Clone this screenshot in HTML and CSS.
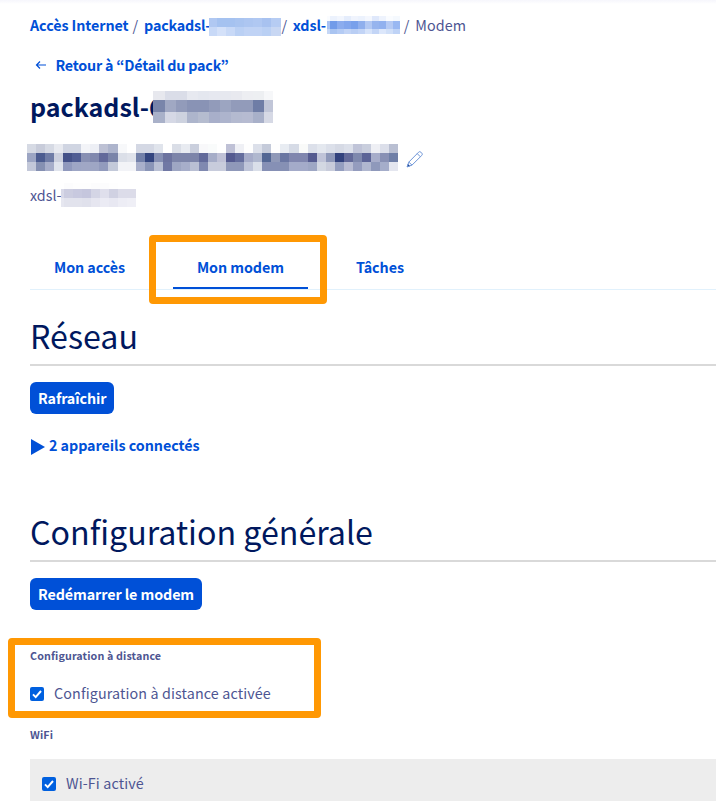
FILE: index.html
```
<!DOCTYPE html>
<html lang="fr">
<head>
<meta charset="utf-8">
<title>Modem</title>
<link rel="stylesheet" href="styles.css">
</head>
<body>
<main class="page">
  <nav class="breadcrumb">
    <a class="crumb-home">Accès Internet</a><span class="sep">/</span>
    <a class="crumb-pack">packadsl-</a><svg class="mosaic m-pack" data-mosaic="pack"></svg><span class="sep sep-pack">/</span>
    <a class="crumb-line">xdsl-</a><svg class="mosaic m-line" data-mosaic="line"></svg><span class="sep sep-line">/</span>
    <span class="current">Modem</span>
  </nav>
  <a class="back">
    <svg class="arrow" viewBox="0 0 12 10"><path d="M11 5H1.5M5 1.5L1.5 5L5 8.5"/></svg>
    <span class="back-text">Retour à “Détail du pack”</span>
  </a>
  <h1 class="title"><span class="title-text">packadsl-6</span><svg class="mosaic m-title" data-mosaic="title"></svg></h1>
  <div class="name">
    <svg class="mosaic m-name" data-mosaic="name"></svg>
    <svg class="pencil" viewBox="0 0 18 18"><path d="M1.2 16.8L2.8 12.1L12.6 2.2Q13.7 1 14.9 2.2L15.8 3.1Q16.9 4.2 15.8 5.4L6 15.1ZM2.8 12.1L6 15.1M11.2 3.6L14.4 6.8"/><path class="tip" d="M1.2 16.8L2 14.2L3.8 16Z"/></svg>
  </div>
  <div class="service"><span class="service-text">xdsl-</span><svg class="mosaic m-service" data-mosaic="service"></svg></div>
  <nav class="tabs">
    <a class="tab"><span class="t-access">Mon accès</span></a>
    <a class="tab active"><span class="t-modem">Mon modem</span><i class="highlight hl-tab"></i></a>
    <a class="tab"><span class="t-tasks">Tâches</span></a>
  </nav>
  <section class="network">
    <h2><span class="h-network">Réseau</span></h2>
    <button class="btn btn-refresh"><span>Rafraîchir</span></button>
    <div class="devices"><svg class="triangle" viewBox="0 0 15 16"><path d="M0 0L14 8L0 16Z"/></svg><span class="devices-text">2 appareils connectés</span></div>
  </section>
  <section class="general">
    <h2><span class="h-general">Configuration générale</span></h2>
    <button class="btn btn-restart"><span>Redémarrer le modem</span></button>
    <div class="remote">
      <div class="legend"><span class="l-remote">Configuration à distance</span></div>
      <div class="check"><svg class="box" viewBox="0 0 14 14"><rect width="14" height="14" rx="2"/><path d="M3 7.4L5.7 10.1L11 4"/></svg><span class="check-text">Configuration à distance activée</span></div>
      <i class="highlight hl-remote"></i>
    </div>
    <div class="legend legend-wifi"><span class="l-wifi">WiFi</span></div>
    <div class="panel check"><svg class="box" viewBox="0 0 14 14"><rect width="14" height="14" rx="2"/><path d="M3 7.4L5.7 10.1L11 4"/></svg><span class="check-text">Wi-Fi activé</span></div>
  </section>
</main>
<script src="mosaic.js"></script>
</body>
</html>
```
FILE: styles.css
```
* { box-sizing: border-box; }
body {
  margin: 0;
  background: #fff;
  color: #4d5592;
  font-family: "Noto Sans CJK KR", "Noto Sans", sans-serif;
  font-size: 14.32px;
  line-height: 24px;
}
.page {
  height: 801px;
  overflow: hidden;
  padding: 13px 0 0 30px;
  background: linear-gradient(#f6f6fc, #fff 4px);
  white-space: nowrap;
}
a { color: #0050d7; font-weight: 700; letter-spacing: -0.08px; }
svg { display: block; flex: none; }
.breadcrumb { display: flex; height: 24px; }
.sep { margin: 0 6px 0 4px; }
.crumb-pack { width: 65px; letter-spacing: -0.2px; }
.crumb-line { width: 34px; }
.m-pack { width: 72px; height: 18px; margin-top: 5px; }
.sep-pack { margin: 0 5.5px 0 0.5px; }
.m-line { width: 74px; height: 18px; margin-top: 3px; }
.sep-line { margin: 0 6px 0 3px; }
.current { letter-spacing: 0.05px; }
.back { display: flex; align-items: center; height: 24px; margin-top: 16px; padding-left: 5px; }
.back-text { letter-spacing: -0.22px; }
.arrow { width: 12px; height: 10px; margin-right: 8.5px; }
.arrow path { fill: none; stroke: #0050d7; stroke-width: 1.2; }
.title {
  display: flex;
  height: 36px;
  margin: 13px 0 0;
  color: #00185e;
  font-size: 25px;
  line-height: 32px;
}
.title-text { width: 123px; }
.m-title { position: relative; width: 120px; height: 32px; margin-top: 1px; }
.name { display: flex; height: 27px; margin: 18px 0 0 -3px; }
.m-name { width: 371px; height: 27px; }
.pencil { width: 18px; height: 18px; margin: 6px 0 0 8px; }
.pencil path { fill: none; stroke: #6f96d8; stroke-width: 1; }
.pencil .tip { fill: #00185e; }
.service { display: flex; height: 24px; margin-top: 12px; }
.m-service { width: 75px; height: 24px; }
.tabs { display: flex; height: 45px; margin-top: 38px; border-bottom: 1px solid #e1f1fc; }
.tab { position: relative; height: 44px; padding: 10px 24px 0; margin-right: 24px; }
.active { border-bottom: 2px solid #0050d7; }
.highlight { position: absolute; border: 7px solid #ff9803; border-radius: 4px; }
.hl-tab { left: -24px; top: -10px; width: 178px; height: 69px; }
h2 {
  height: 49px;
  margin: 0 0 16px;
  border-bottom: 2px solid #d9d9d9;
  color: #00185e;
  font-size: 32.2px;
  font-weight: 400;
  line-height: 36px;
}
.network { height: 196px; padding-top: 27px; }
.btn {
  display: block;
  height: 32px;
  padding: 0 8px;
  border: 0;
  border-radius: 6px;
  background: #0050d7;
  color: #fff;
  font: 700 14.32px/32px "Noto Sans CJK KR", sans-serif;
  letter-spacing: -0.1px;
}
.btn span { display: block; }
.devices { display: flex; height: 24px; margin: 19px 0 0 1px; color: #0050d7; font-weight: 700; letter-spacing: -0.06px; }
.triangle { width: 15px; height: 16px; margin: 6px 3px 0 0; }
.triangle path { fill: #0050d7; }
.general { padding-top: 27px; }
.remote { position: relative; height: 114px; padding-top: 36px; }
.legend { height: 20px; font-size: 10.74px; font-weight: 700; line-height: 20px; letter-spacing: 0.11px; }
.check { display: flex; }
.check-text { letter-spacing: 0.12px; }
.remote .check { height: 24px; margin-top: 15px; }
.box { width: 14px; height: 14px; margin: 6px 10px 0 0; }
.box rect { fill: #0060df; }
.box path { fill: none; stroke: #fff; stroke-width: 2; }
.hl-remote { left: -22px; top: 28px; width: 313px; height: 80px; }
.legend-wifi { height: 35px; line-height: 22px; }
.panel { height: 60px; padding: 12px 0 0 12px; background: #ededed; }
```
FILE: mosaic.js
```
// Colour rows of each masked value, drawn as blocks between the given edges.
const range = (first, step, end) => {
  const edges = [0];
  for (let x = first; x < end - 1; x += step) edges.push(x);
  edges.push(end);
  return edges;
};
const mosaics = {
  pack: { x: range(8, 9, 72), y: [0, 9, 18], rows: [
    "b0c8f2 a5c2f0 a5c2f0 a9c4f0 adc6f1 b0c8f2 a8c2f0 b6ccf3",
    "c8d9f7 d4e1f9 c8d9f7 bad0f4 c0d3f5 c0d3f5 bad0f4 c8d7f3"] },
  line: { x: [0, 3, 10, 17, 24, 31, 38, 45, 52, 59, 66, 73], y: [0, 5, 13, 18], rows: [
    "fafcff ecf2fd f2f6fe e5edfc f0f4fd ecf2fd f4f7fe dfe8fb eef3fd fafcff f5f9fe",
    "a8c2f3 719be9 8bacee 82a6ed 78a0eb 8fafed b2c8f3 96b4ee 91b1ef b5caf4 99b8f2",
    "c5d7f6 a9c4f1 b4cbf4 c2d4f6 b9cef4 c2d4f6 d6e3fa c3d5f6 dce7fb d0dff8 bfd3f6"] },
  title: { x: range(12, 11, 120), y: [0, 9, 20.5, 32], rows: [
    "e7e8ee dadde8 dadde8 e7e9f0 e4e7ef e6e8f0 e6e8ef e8e9ef edeef2 edeff2 f6f7f9",
    "7985aa a0a8c3 929bba 8993b5 8993b5 929bba 9ca5c1 929bba 929bba 6f7da6 c1c6d8",
    "a9b1c9 d5d8e5 cdd2df adb5cc b5bccf a8afca adb4cd b4bad0 b6bbd1 a8b0c9 d6d9e5"] },
  name: { x: range(9.05, 9.05, 371), y: [0, 9, 18, 27], rows: [
    "d6dae4 c8ccda d6dae4 e8eaf0 d0d5e2 d0d5e2 f3f4f8 edeff5 bdc1d4 adb4cc f7f8fa ffffff d4d8e4 d4d8e4 e0e4ec ffffff dadee7 e8ebf1 cacfdd f8f8fa f9fbfb ffffff bfc1d6 eff0f5 fefefe dce0ea c5cbda fefefe e8ecf2 d6dbe6 f9faf9 dce0ea e4e8ef dce0ea d6dae5 dce0ea c0c4d8 c9cedd eeeff4 dcdfea b9bfd2",
    "9ca5c3 4c5c90 6f7ca6 ccd0de 445188 505d93 8890b3 8088ae 62699a 7a84a9 dbdfe8 e0e3eb 7280a9 33457f 858fb3 6c739f 7c84a9 7c84a9 7c84a9 626a9a a6adc8 bfc1d6 545a90 646d9d a6acc9 b0b8cf 536794 9099b8 6a76a2 8086ae 8086ae 555b90 c0c4d8 8e98b9 32427d 626999 7e88ad 5c6497 a7adca 8890b4 6f7fa7",
    "c3c8d9 8590b2 a7aeca e0e4ed 9099bd 9ea6c5 a0a7c5 9ea6c4 929bbd c3c9d9 f2f3f7 f2f3f7 a9b0cb 8a95b7 b9c0d4 7078a4 9ea6c3 a7aeca b9bfd3 8089b0 c8ccdc c8ccdc 8f98b9 8f98b9 bfc5d9 dadfe9 8690b5 8690b5 8690b4 a4abc9 a4abc9 9ea7c4 d3d8e2 c8ccdb 949ebf b8bcd3 949cbe b0b7cf 8f99bb a5adca e4e6ef"] },
  service: { x: range(3, 9, 75), y: [0, 6, 15, 24], rows: [
    "ffffff fcfcfd fefefe fefefe fcfcfd fcfcfd fefefe ffffff ffffff",
    "d8d9e8 cccde0 c8c9df c5c6dd d4d5e5 dfdfec d0d1e2 dcdce9 dcdce9",
    "e6e7f0 e2e3ed e2e3ed e0e1ec e6e6f0 ebebf4 e8e8f2 ededf5 efeff6"] }
};
document.querySelectorAll("[data-mosaic]").forEach(svg => {
  const { x, y, rows } = mosaics[svg.dataset.mosaic];
  svg.setAttribute("shape-rendering", "crispEdges");
  rows.forEach((row, r) => row.split(" ").forEach((color, c) => {
    if (x[c + 1] === undefined) return;
    const rect = document.createElementNS("http://www.w3.org/2000/svg", "rect");
    rect.setAttribute("x", x[c]);
    rect.setAttribute("y", y[r]);
    rect.setAttribute("width", x[c + 1] - x[c]);
    rect.setAttribute("height", y[r + 1] - y[r]);
    rect.setAttribute("fill", "#" + color);
    svg.append(rect);
  }));
});
```
